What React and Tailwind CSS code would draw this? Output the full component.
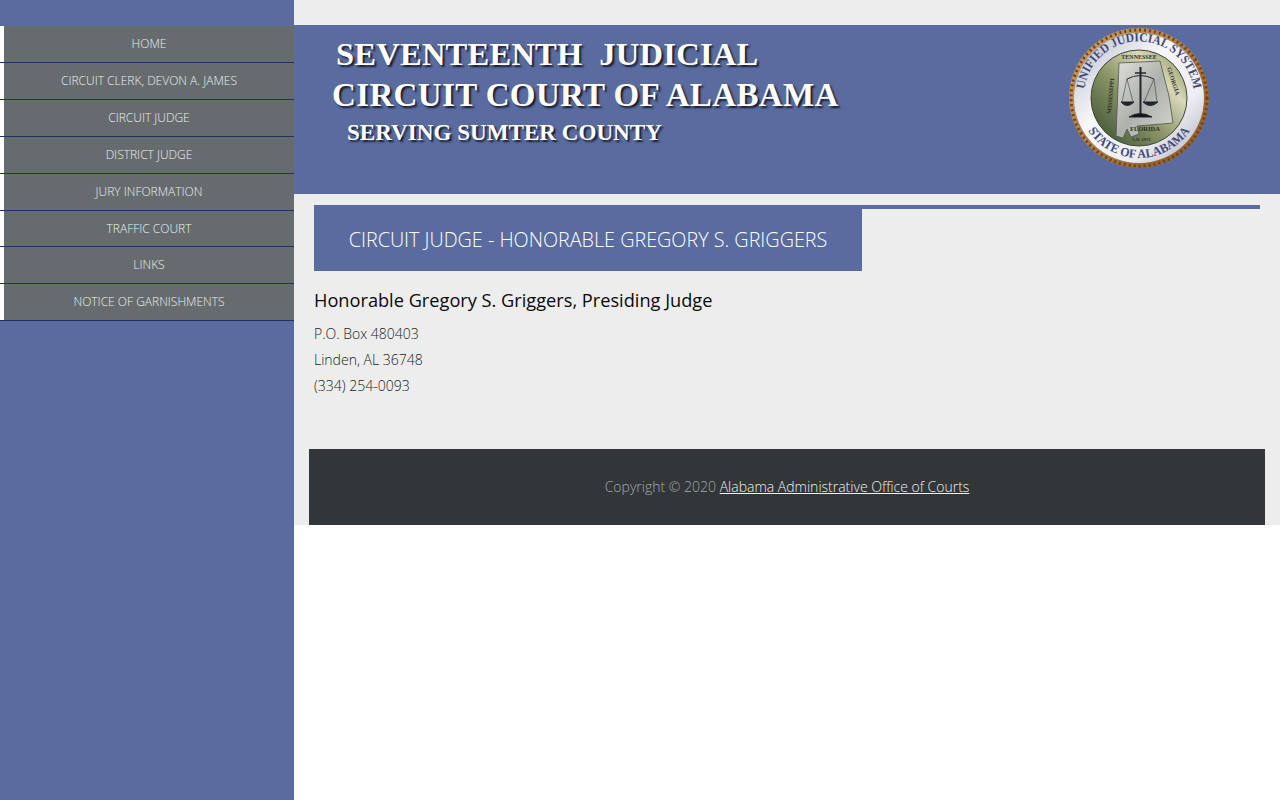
import React from 'react';

const menuItems = [
  'HOME',
  'CIRCUIT CLERK, DEVON A. JAMES',
  'CIRCUIT JUDGE',
  'DISTRICT JUDGE',
  'JURY INFORMATION',
  'TRAFFIC COURT',
  'LINKS',
  'NOTICE OF GARNISHMENTS',
];

const sealFont = "'Liberation Serif', serif";

const Seal = () => (
  <svg width="144" height="144" viewBox="0 0 144 144" className="block">
    <defs>
      <linearGradient id="silver" x1="0" y1="0" x2="1" y2="1">
        <stop offset="0" stopColor="#b9b9cc" />
        <stop offset="0.4" stopColor="#f7f7f9" />
        <stop offset="0.7" stopColor="#eeeef2" />
        <stop offset="1" stopColor="#a9a9bd" />
      </linearGradient>
      <linearGradient id="inner" x1="0.1" y1="0.9" x2="0.9" y2="0.15">
        <stop offset="0" stopColor="#46583a" />
        <stop offset="0.45" stopColor="#8b9668" />
        <stop offset="0.8" stopColor="#d8d8ba" />
        <stop offset="1" stopColor="#a7a97a" />
      </linearGradient>
      <linearGradient id="state" x1="0" y1="0" x2="1" y2="1">
        <stop offset="0" stopColor="#dfe0de" />
        <stop offset="0.5" stopColor="#aeb0ab" />
        <stop offset="1" stopColor="#d6d7d2" />
      </linearGradient>
      <linearGradient id="rope" x1="0" y1="0" x2="1" y2="1">
        <stop offset="0" stopColor="#c9a268" />
        <stop offset="1" stopColor="#8a5526" />
      </linearGradient>
      <path id="topArc" d="M 72 72 m -53 13 a 55 55 0 1 1 106 0" />
      <path id="bottomArc" d="M 72 72 m -60 10 a 61 61 0 0 0 120 0" />
    </defs>
    <circle cx="72" cy="72" r="70" fill="url(#rope)" />
    <circle cx="72" cy="72" r="68" fill="none" stroke="#6f4319" strokeWidth="3" strokeDasharray="2 3" />
    <circle cx="72" cy="72" r="65" fill="url(#silver)" />
    <circle cx="72" cy="72" r="48" fill="url(#inner)" stroke="#3c4a32" strokeWidth="1" />
    {/* state outline */}
    <path
      d="M52 37 L93 35 L102 70 L106 97 L70 100 L72 108 L64 111 L60 103 L56 112 L49 110 Z"
      fill="url(#state)"
      stroke="#4f544a"
      strokeWidth="0.8"
    />
    {/* scales */}
    <g stroke="#23252c" fill="none" strokeWidth="1">
      <path d="M73.5 41 V89" strokeWidth="2" />
      <path d="M68 47 H79" strokeWidth="1.5" />
      <path d="M60 53 Q73 46 87 53" />
      <path d="M60 53 L55 76 M60 53 L66 76 M87 53 L77 76 M87 53 L90 76" strokeWidth="0.5" />
      <path d="M54 76 Q60 83 67 76 Z" fill="#23252c" />
      <path d="M76 76 Q83 83 91 76 Z" fill="#23252c" />
      <path d="M62 91 Q73 84 85 91 Z" fill="#101216" />
    </g>
    <text fill="#3d4a7c" fontSize="12.5" fontWeight="700" fontFamily={sealFont}>
      <textPath href="#topArc" startOffset="50%" textAnchor="middle" textLength="158" lengthAdjust="spacingAndGlyphs">
        UNIFIED JUDICIAL SYSTEM
      </textPath>
    </text>
    <text fill="#3d4a7c" fontSize="12.5" fontWeight="700" fontFamily={sealFont}>
      <textPath href="#bottomArc" startOffset="50%" textAnchor="middle" textLength="120" lengthAdjust="spacingAndGlyphs">
        STATE OF ALABAMA
      </textPath>
    </text>
    <text x="78" y="105" textAnchor="middle" fontSize="6.5" fill="#2d3328" fontFamily={sealFont}>FLORIDA</text>
    <text x="74" y="115" textAnchor="middle" fontSize="4.5" fill="#2d3328" fontFamily={sealFont}>A.D. 1971</text>
    <text x="72" y="33" textAnchor="middle" fontSize="6" fill="#2d3328" fontFamily={sealFont}>TENNESSEE</text>
    <text transform="translate(44 88) rotate(-85)" fontSize="6" fill="#2d3328" fontFamily={sealFont}>MISSISSIPPI</text>
    <text transform="translate(100 42) rotate(72)" fontSize="6" fill="#2d3328" fontFamily={sealFont}>GEORGIA</text>
  </svg>
);

const App = () => {
  return (
    <div className="flex min-h-[800px] bg-white font-['Open_Sans',sans-serif]">
      {/* Left menu */}
      <nav className="w-[294px] shrink-0 bg-[#5a6c9f] pt-[26.3px]">
        {menuItems.map((item) => (
          <div key={item} className="h-[36.86px] border-b border-[#1b3560] bg-white pl-[4px]">
            <a
              href="#"
              className="flex h-full items-center justify-center bg-[#666c6e] text-[12px] font-light text-[#eceeee]"
            >
              {item}
            </a>
          </div>
        ))}
      </nav>

      <div className="flex-1 self-start">
        <div className="bg-[#ededed] pt-[25px]">
          {/* Banner */}
          <header className="flex h-[169px] justify-between bg-[#5a6c9f] pl-[38px] pr-[69px] font-['Liberation_Serif',serif] font-bold text-white [text-shadow:2px_2px_2px_#15192b]">
            <div className="pt-[9px]">
              <div className="pl-[4px] text-[32.5px] leading-[40px] tracking-[0.25px] whitespace-pre">SEVENTEENTH  JUDICIAL</div>
              <div className="pt-[1px] text-[33px] leading-[40px] tracking-[0.37px]">CIRCUIT COURT OF ALABAMA</div>
              <div className="pl-[15px] text-[23.1px] leading-[35px]">SERVING SUMTER COUNTY</div>
            </div>
            <div className="pt-[1px] [text-shadow:none]">
              <Seal />
            </div>
          </header>

          {/* Page content */}
          <main className="px-[20px] pt-[11px]">
            <div className="border-t-[4px] border-[#5a6c9f]">
              <h1 className="w-[548px] bg-[#5a6c9f] py-[16px] text-center text-[19.75px] leading-[30px] font-light text-white">
                CIRCUIT JUDGE - HONORABLE GREGORY S. GRIGGERS
              </h1>
            </div>
            <h2 className="mt-[15px] text-[18.2px] leading-[29px] text-[#0a0a0a]">
              Honorable Gregory S. Griggers, Presiding Judge
            </h2>
            <div className="mt-[6px] text-[14px] leading-[26px] font-light text-[#222]">
              <p>P.O. Box 480403</p>
              <p>Linden, AL 36748</p>
              <p>(334) 254-0093</p>
            </div>
          </main>

          {/* Footer */}
          <div className="px-[15px] pt-[50px]">
            <footer className="flex h-[76px] items-center justify-center bg-[#323638] pb-[2px] text-[14px] font-light text-[#a5a8a9]">
              <span>
                Copyright © 2020{' '}
                <a href="#" className="text-[#f0f0f0] underline">
                  Alabama Administrative Office of Courts
                </a>
              </span>
            </footer>
          </div>
        </div>
      </div>
    </div>
  );
};

export default App;
